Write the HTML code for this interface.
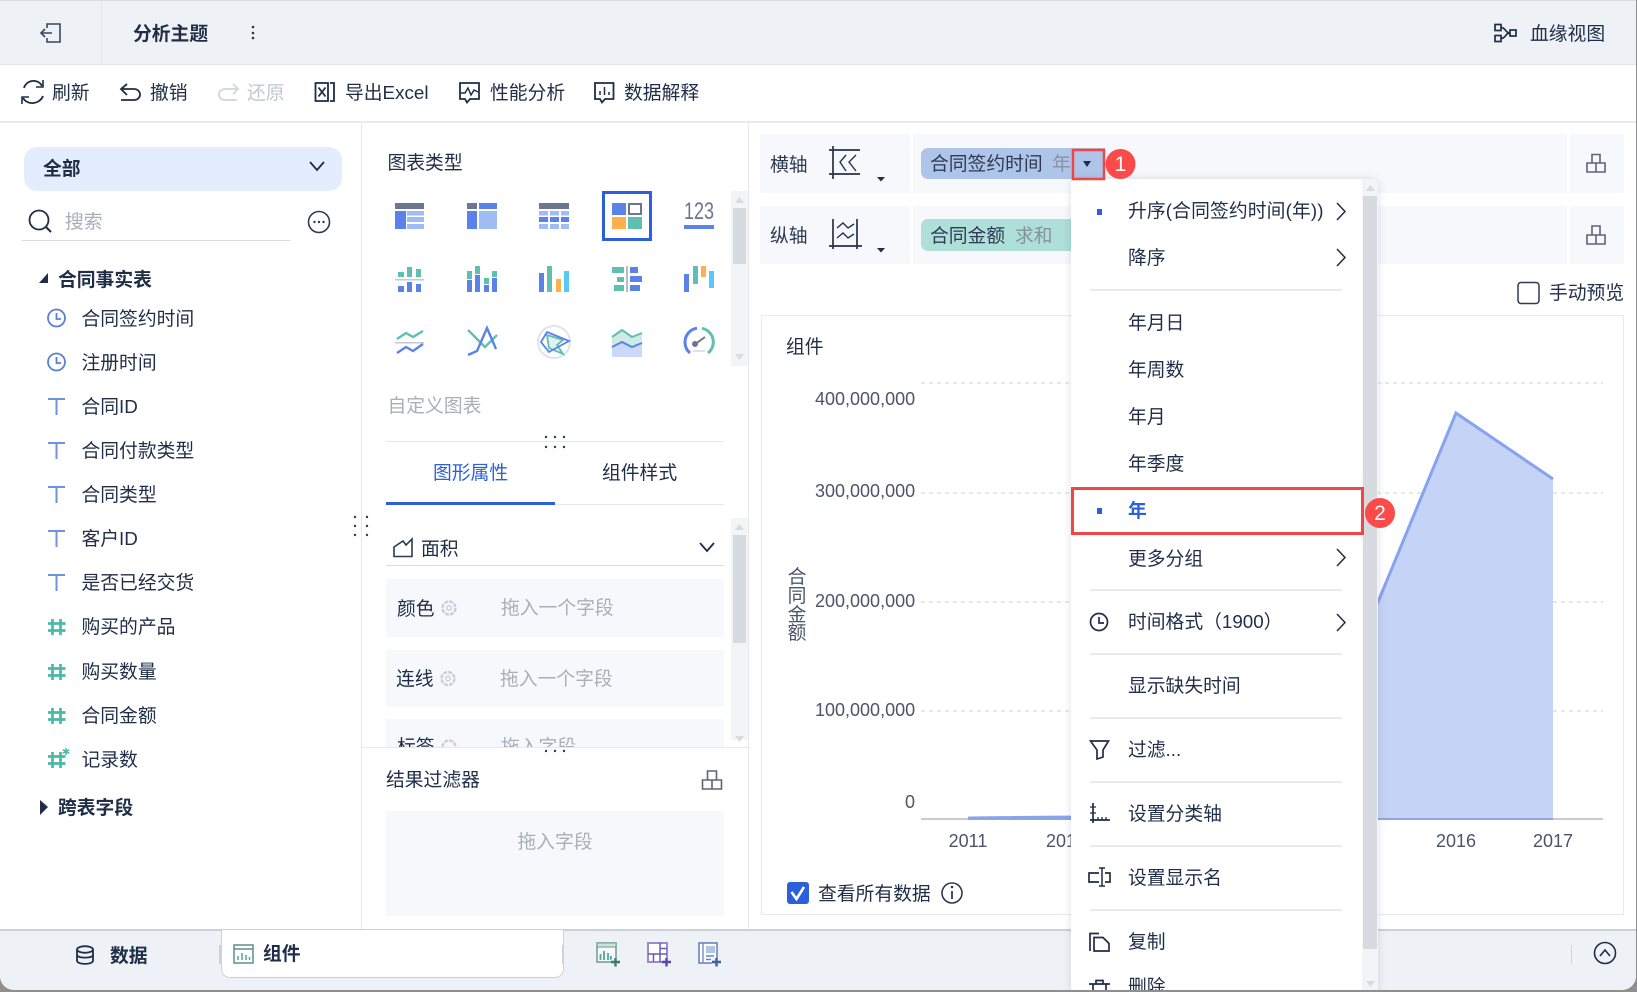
<!DOCTYPE html>
<html lang="zh">
<head>
<meta charset="utf-8">
<title>分析主题</title>
<style>
html,body{margin:0;padding:0;width:1637px;height:992px;overflow:hidden;background:#8f8f8f}
#app{position:absolute;left:0;top:0;width:1636px;height:990px;background:#fff;overflow:hidden;border-radius:0 0 14px 14px;
font-family:"Liberation Sans","Noto Sans CJK SC",sans-serif;font-size:18.8px;color:#1f2d47}
.t{position:absolute;white-space:nowrap;line-height:26px;height:26px;margin-top:1px}
.b{font-weight:700}
.g{color:#a9aeb9}
.box{position:absolute}
.fill{background:#f7f8fc}
svg{position:absolute;overflow:visible}
.sep{position:absolute;left:1090px;width:252px;height:2px;background:#e9ebef}
.ax{font-size:18px;color:#4b5468}
</style>
</head>
<body>
<div id="app">
<!-- bars -->
<div class="box" style="left:0;top:0;width:1636px;height:65px;background:#eef1f6;border-top:1px solid #d8dbe0;border-bottom:1px solid #dfe3ea;box-sizing:border-box"></div>
<div class="box" style="left:101px;top:1px;width:1px;height:63px;background:#e3e6ec"></div>
<div class="box" style="left:0;top:121px;width:1636px;height:2px;background:#e9ebef"></div>
<div class="box" style="left:361px;top:122px;width:1px;height:808px;background:#e6e8ec"></div>
<div class="box" style="left:748px;top:122px;width:1px;height:808px;background:#e6e8ec"></div>

<!-- pill -->
<div class="box" style="left:24px;top:147px;width:318px;height:44px;background:#e3edfd;border-radius:13px"></div>
<div class="box" style="left:22px;top:240px;width:268px;height:1px;background:#d8dbe6"></div>

<!-- middle boxes -->
<div class="box" style="left:731px;top:191px;width:17px;height:175px;background:#f2f4f6"></div>
<div class="box" style="left:733px;top:208px;width:13px;height:56px;background:#d7dbe0"></div>
<div class="box" style="left:386px;top:441px;width:338px;height:1px;background:#e6e8ec"></div>
<div class="box" style="left:386px;top:504px;width:338px;height:1px;background:#e6e8ec"></div>
<div class="box" style="left:386px;top:502px;width:169px;height:3px;background:#2b5fdb"></div>
<div class="box" style="left:731px;top:518px;width:17px;height:222px;background:#f2f4f6"></div>
<div class="box" style="left:733px;top:535px;width:13px;height:108px;background:#d7dbe0"></div>
<div class="box" style="left:386px;top:565px;width:338px;height:1px;background:#d8dbe2"></div>
<div class="box fill" style="left:386px;top:579px;width:338px;height:58px"></div>
<div class="box fill" style="left:386px;top:650px;width:338px;height:57px"></div>
<div class="box fill" style="left:386px;top:811px;width:338px;height:105px"></div>

<!-- axis rows -->
<div class="box fill" style="left:760px;top:134px;width:150px;height:59px"></div>
<div class="box fill" style="left:913px;top:134px;width:654px;height:59px"></div>
<div class="box fill" style="left:1570px;top:134px;width:54px;height:59px"></div>
<div class="box fill" style="left:760px;top:206px;width:150px;height:58px"></div>
<div class="box fill" style="left:913px;top:206px;width:654px;height:58px"></div>
<div class="box fill" style="left:1570px;top:206px;width:54px;height:58px"></div>
<div class="box" style="left:921px;top:148px;width:184px;height:31px;background:#aec4e8;border-radius:7px 0 0 7px"></div>
<div class="box" style="left:921px;top:219px;width:170px;height:32px;background:#aedfd8;border-radius:7px 0 0 7px"></div>

<!-- chart frame -->
<div class="box" style="left:761px;top:315px;width:863px;height:600px;border:1px solid #e6e8ec;box-sizing:border-box"></div>

<!-- main icon svg -->
<svg width="1637" height="992" style="left:0;top:0" fill="none">
 <!-- back -->
 <g stroke="#3a4660" stroke-width="1.6"><path d="M47 28V24H60V42H47V38"/><path d="M52 33H41M45 29L41 33L45 37"/></g>
 <g fill="#2b3750"><circle cx="253" cy="27" r="1.3"/><circle cx="253" cy="33" r="1.3"/><circle cx="253" cy="38" r="1.3"/></g>
 <!-- lineage -->
 <g stroke="#1f2d47" stroke-width="1.7"><rect x="1495" y="24.5" width="6" height="6"/><rect x="1495" y="35.5" width="6" height="6"/><rect x="1510" y="30" width="6" height="6"/><path d="M1501 27.5C1506 27.5 1505 33 1510 33C1505 33 1506 38.5 1501 38.5"/></g>
 <!-- toolbar -->
 <g stroke="#1f2d47" stroke-width="1.8">
  <path d="M24 88C26 80 38 78 42 86M43 96C40 104 28 106 23 98"/><path d="M43 80V87H36" stroke-width="1.6"/><path d="M22 104V97H29" stroke-width="1.6"/>
  <path d="M127 84L121 89L127 95M121 89H134C142 89 142 100 134 100H121"/>
  <path d="M233 84L238 89L233 94M238 89H225C217 89 217 100 225 100H237" stroke="#d1d5dc"/>
  <path d="M315.500 83H328V101H315.500Z"/><path d="M318.500 87.500L325.500 96.500M325.500 87.500L318.500 96.500"/><path d="M330 83H334V101H330"/>
  <path d="M460 83H479V99H470L467 102.500L465 99H460Z"/><path d="M461 93L465 93L468 88L471 95L474 90L478 92" stroke-width="1.5"/>
  <path d="M595 83H613.500V99H605L602 102.500L600 99H595Z"/><path d="M600 95V91M604.500 95V87M609 95V92" stroke-width="1.500"/>
 </g>
 <!-- left -->
 <path d="M310 162L317 170L324 162" stroke="#1f2d47" stroke-width="1.8"/>
 <circle cx="39" cy="220" r="9.500" stroke="#1f2d47" stroke-width="1.8"/><path d="M46 227L51 232" stroke="#1f2d47" stroke-width="2"/>
 <circle cx="319" cy="222" r="10.500" stroke="#2d3a54" stroke-width="1.6"/><g fill="#2d3a54"><circle cx="314.500" cy="222" r="1.200"/><circle cx="319" cy="222" r="1.200"/><circle cx="323.500" cy="222" r="1.200"/></g>
 <path d="M39 283L48 283L48 273Z" fill="#1f2d47"/>
 <path d="M40 800L48 807L40 815Z" fill="#1f2d47"/>
 <!-- clocks -->
 <g stroke="#5a7fd6" stroke-width="1.8"><circle cx="56.500" cy="318" r="8.500"/><path d="M56.500 313V319H61"/><circle cx="56.500" cy="362" r="8.500"/><path d="M56.500 357V363H61"/></g>
 <!-- T -->
 <g stroke="#6f93e0" stroke-width="2"><path d="M48 399H65M56.500 399V415"/><path d="M48 443H65M56.500 443V459"/><path d="M48 487H65M56.500 487V503"/><path d="M48 531H65M56.500 531V547"/><path d="M48 575H65M56.500 575V591"/></g>
 <!-- # -->
 <g stroke="#49b9a8" stroke-width="2.700"><path d="M52.500 619V635M60.500 619V635M48 623.500H65.500M48 630.500H65.500"/><path d="M52.500 664V680M60.500 664V680M48 668.500H65.500M48 675.500H65.500"/><path d="M52.500 708V724M60.500 708V724M48 712.500H65.500M48 719.500H65.500"/><path d="M52.500 752V768M60.500 752V768M48 756.500H65.500M48 763.500H65.500"/></g>
 <path d="M66 748V755M62.800 749.700L69.200 753.300M69.200 749.700L62.800 753.300" stroke="#49b9a8" stroke-width="1.500"/>
 <!-- chart icons row 1 -->
 <g>
  <rect x="395" y="203" width="29" height="6" fill="#6b7690"/><rect x="395" y="211" width="11" height="18" fill="#5b82ea"/><rect x="407" y="211" width="17" height="4.500" fill="#9fbcf5"/><rect x="407" y="217" width="17" height="5" fill="#9fbcf5"/><rect x="407" y="224" width="17" height="5" fill="#9fbcf5"/>
  <rect x="467" y="203" width="10" height="6" fill="#6b7690"/><rect x="479" y="203" width="18" height="6" fill="#5b82ea"/><rect x="467" y="211" width="10" height="18" fill="#5b82ea"/><rect x="479" y="211" width="18" height="18" fill="#9fbcf5"/>
  <rect x="539" y="203" width="30" height="6" fill="#6b7690"/>
  <g fill="#9fbcf5"><rect x="539" y="211" width="9" height="4.500"/><rect x="550" y="211" width="9" height="4.500"/><rect x="561" y="211" width="8" height="4.500"/><rect x="539" y="224" width="9" height="5"/><rect x="550" y="224" width="9" height="5"/><rect x="561" y="224" width="8" height="5"/></g>
  <g fill="#5b82ea"><rect x="539" y="217" width="9" height="5"/><rect x="550" y="217" width="9" height="5"/><rect x="561" y="217" width="8" height="5"/></g>
  <rect x="603.500" y="192.500" width="47" height="47" stroke="#2b5fdb" stroke-width="3"/>
  <rect x="612" y="203" width="14" height="12" fill="#5b82ea"/><rect x="629" y="204" width="12" height="10" stroke="#6b7690" stroke-width="2"/><rect x="612" y="217" width="14" height="12" fill="#ffb04c"/><rect x="628" y="217" width="14" height="12" fill="#5fbfb0"/>
  <rect x="684" y="225" width="30" height="4" fill="#5b82ea"/>
 </g>
 <!-- row 2 -->
 <g fill="#5fbfb0"><rect x="398" y="272" width="6" height="5"/><rect x="407" y="267" width="5" height="10"/><rect x="416" y="269" width="5" height="8"/></g>
 <rect x="395" y="279" width="29" height="1.500" fill="#c3c9d6"/>
 <g fill="#5b82ea"><rect x="398" y="286" width="6" height="6"/><rect x="407" y="282" width="5" height="10"/><rect x="416" y="284" width="5" height="8"/></g>
 <g fill="#5fbfb0"><rect x="467" y="271" width="5" height="8"/><rect x="475" y="266" width="5" height="8"/><rect x="484" y="278" width="5" height="6"/><rect x="492" y="271" width="5" height="6"/></g>
 <g fill="#5b82ea"><rect x="467" y="280" width="5" height="12"/><rect x="475" y="275" width="5" height="17"/><rect x="484" y="285" width="5" height="7"/><rect x="492" y="278" width="5" height="14"/></g>
 <rect x="539" y="273" width="5" height="19" fill="#5b82ea"/><rect x="547" y="266" width="5" height="26" fill="#5fbfb0"/><rect x="556" y="279" width="5" height="13" fill="#ffb04c"/><rect x="564" y="271" width="5" height="21" fill="#58c8f5"/>
 <rect x="626" y="266" width="2" height="26" fill="#b6bcc9"/>
 <g fill="#5fbfb0"><rect x="612" y="267" width="12" height="6"/><rect x="617" y="277" width="7" height="5"/><rect x="614" y="285" width="10" height="6"/></g>
 <g fill="#5b82ea"><rect x="630" y="267" width="8" height="6"/><rect x="630" y="276" width="12" height="6"/><rect x="630" y="285" width="10" height="6"/></g>
 <rect x="684" y="274" width="5" height="18" fill="#5b82ea"/><rect x="693" y="266" width="5" height="18" fill="#5fbfb0"/><rect x="701" y="266" width="5" height="11" fill="#ffb04c"/><rect x="709" y="271" width="5" height="17" fill="#58c8f5"/>
 <!-- row 3 -->
 <path d="M397 339L406 333L413 337L423 331" stroke="#5fbfb0" stroke-width="2.400"/><rect x="395" y="342" width="29" height="1.500" fill="#c3c9d6"/><path d="M397 353L406 347L413 351L423 344" stroke="#5b82ea" stroke-width="2.400"/>
 <path d="M468 330L485 347L497 335" stroke="#5fbfb0" stroke-width="2.400"/><path d="M468 355L477 351L487 328L496 349" stroke="#5b82ea" stroke-width="2.400"/>
 <circle cx="554" cy="342" r="16" stroke="#dfe3ee" stroke-width="2"/><path d="M547 335L563 340L557 345L563 354L549 348Z" stroke="#5fbfb0" stroke-width="1.800" fill="#e3f3f0"/><path d="M541 342L547 332L569 341L558 347L549 352Z" stroke="#5b82ea" stroke-width="1.800"/>
 <path d="M612 337L622 330L632 337L642 333V343L632 347L622 342L612 347Z" fill="#cdeae5"/><path d="M612 347L622 342L632 347L642 343V357H612Z" fill="#cbd8f8"/>
 <path d="M612 337L622 330L632 337L642 333" stroke="#5fbfb0" stroke-width="2"/><path d="M612 347L622 342L632 347L642 343" stroke="#5b82ea" stroke-width="2"/>
 <path d="M690 353A14 14 0 0 1 685 342A14 14 0 0 1 697 328.200" stroke="#5b82ea" stroke-width="3"/><path d="M702 328.300A14 14 0 0 1 708 353" stroke="#5fbfb0" stroke-width="3"/><path d="M694 345L705 337" stroke="#6b7690" stroke-width="2"/><circle cx="695" cy="344" r="3" fill="#6b7690"/><rect x="693" y="350" width="12" height="2" fill="#dfe3ea"/>
 <!-- drag dots -->
 <g fill="#2d3a54"><circle cx="546" cy="437" r="1.200"/><circle cx="555" cy="437" r="1.200"/><circle cx="564" cy="437" r="1.200"/><circle cx="546" cy="447" r="1.200"/><circle cx="555" cy="447" r="1.200"/><circle cx="564" cy="447" r="1.200"/>
 <circle cx="355" cy="517" r="1.200"/><circle cx="367" cy="517" r="1.200"/><circle cx="355" cy="526" r="1.200"/><circle cx="367" cy="526" r="1.200"/><circle cx="355" cy="535" r="1.200"/><circle cx="367" cy="535" r="1.200"/></g>
 <!-- scroll arrows -->
 <g fill="#d7dbe0"><path d="M735 203L739.500 197L744 203Z"/><path d="M735 354L739.500 360L744 354Z"/><path d="M735 530L739.500 524L744 530Z"/><path d="M735 736L739.500 742 744 736Z"/></g>
 <!-- area icon -->
 <path d="M394 556.500V547L403 541L406 545L412 539V556.500Z" stroke="#2d3a54" stroke-width="1.600"/>
 <path d="M700 543L707 551L714 543" stroke="#1f2d47" stroke-width="1.800"/>
 <!-- gears -->
 <g stroke="#c9ced8"><circle cx="449" cy="608" r="6.500" stroke-width="2.400" stroke-dasharray="4 1.100"/><circle cx="449" cy="608" r="2.300" stroke-width="1.400"/><circle cx="448" cy="678.500" r="6.500" stroke-width="2.400" stroke-dasharray="4 1.100"/><circle cx="448" cy="678.500" r="2.300" stroke-width="1.400"/></g>
 <!-- filter box icon -->
 <g stroke="#5b6578" stroke-width="1.600"><path d="M702.500 780H721.500V789H702.500Z"/><path d="M707.500 780V771H716.500V780"/><path d="M712 780V789"/></g>
 <!-- axis icons -->
 <g stroke="#25324c" stroke-width="1.700">
  <path d="M833 146V179M829 150H860M829 174H860"/><path d="M846 155L840 162L846 171M856 155L849 162L856 171" stroke-width="1.400"/>
  <path d="M833 219V249M857 219V249M829 246H862"/><path d="M837 228L843 223L848 228L854 224M837 238L843 233L848 238L854 234" stroke-width="1.400"/>
 </g>
 <path d="M877 177H885L881 181.500Z" fill="#1f2d47"/><path d="M877 248H885L881 252.500Z" fill="#1f2d47"/>
 <g stroke="#5b6578" stroke-width="1.600"><path d="M1587 163H1605V172H1587Z"/><path d="M1592 163V154.500H1600V163"/><path d="M1596 163V172"/><path d="M1587 235H1605V244H1587Z"/><path d="M1592 235V226H1600V235"/><path d="M1596 235V244"/></g>
 <rect x="1518" y="282.500" width="21" height="21" rx="3" stroke="#2d3a54" stroke-width="1.500"/>
 <!-- chart grid -->
 <g stroke="#dfe1e5" stroke-width="1.500" stroke-dasharray="4 4"><path d="M921 383H1603M921 493H1603M921 602H1603M921 711H1603"/></g>
 <path d="M968 819L1075 817L1378 602L1456 413L1553 479V819Z" fill="#c5d3f6"/>
 <path d="M968 818L1075 817L1378 602L1456 413L1553 479" stroke="#86a3f0" stroke-width="3"/>
 <path d="M921 819H1603" stroke="#c9ccd2" stroke-width="2"/>
 <path d="M968 819H1071M1378 819H1553" stroke="#8fa5e0" stroke-width="2"/>
 <!-- check -->
 <rect x="787" y="882" width="22" height="22" rx="3" fill="#2b5fdb"/><path d="M791.500 892L796.500 899L804 887" stroke="#fff" stroke-width="2.600"/>
 <circle cx="952" cy="893" r="10" stroke="#2d3a54" stroke-width="1.600"/><path d="M952 891V899" stroke="#2d3a54" stroke-width="1.800"/><circle cx="952" cy="887" r="1.300" fill="#2d3a54"/>
</svg>

<!-- Bottom bar -->
<div class="box" style="left:0;top:929px;width:1636px;height:61px;background:#eef1f6;border-top:2px solid #ccd0d8;box-sizing:border-box"></div>
<div class="box" style="left:221px;top:930px;width:343px;height:48px;background:#fff;border:1px solid #cdd2da;border-top:none;border-radius:0 0 9px 9px;box-sizing:border-box"></div>
<div class="box" style="left:219px;top:945px;width:2px;height:19px;background:#cdd2da"></div>
<div class="box" style="left:562px;top:945px;width:2px;height:19px;background:#cdd2da"></div>
<div class="box" style="left:1571px;top:945px;width:1px;height:19px;background:#cfd3da"></div>
<svg width="1637" height="992" style="left:0;top:0" fill="none">
 <g stroke="#1f2d47" stroke-width="1.800"><ellipse cx="85" cy="949.500" rx="8" ry="3.300"/><path d="M77 949.500V960.500C77 965 93 965 93 960.500V949.500M77 955C77 958.500 93 958.500 93 955"/></g>
 <g><rect x="234" y="945" width="19" height="18" stroke="#5e8d87" stroke-width="1.500"/><path d="M234 949H253" stroke="#5e8d87" stroke-width="1.500"/><path d="M238 960V956M242 960V953M246 960V955M249.500 960V957" stroke="#49a99b" stroke-width="1.500"/></g>
 <g><rect x="597" y="943" width="19" height="19" fill="#f6f8fb" stroke="#6b9a93" stroke-width="1.500"/><rect x="597" y="943" width="19" height="4" fill="#cfe2df" stroke="#6b9a93" stroke-width="1"/><path d="M600.500 960V954M604 960V951M608 960V953M611 960V956" stroke="#49a99b" stroke-width="1.800"/><path d="M611 962H620M615.500 958V966.500" stroke="#eef1f6" stroke-width="5.500"/><path d="M611 962H620M615.500 958V966.500" stroke="#3f7a72" stroke-width="2.400"/></g>
 <g><rect x="648" y="943" width="19" height="19" fill="#fff" stroke="#9a8ccc" stroke-width="2"/><path d="M660 943V962M648 954H667M653.500 954V962M660 948.500H667" stroke="#6e58b8" stroke-width="1.500"/><path d="M662 962H671M666.500 958V966.500" stroke="#eef1f6" stroke-width="5.500"/><path d="M662 962H671M666.500 958V966.500" stroke="#5a46ac" stroke-width="2.400"/></g>
 <g><rect x="699" y="943" width="18" height="20" fill="#fff" stroke="#6b85bd" stroke-width="1.600"/><path d="M703 943V963" stroke="#6b85bd" stroke-width="1.300"/><rect x="706" y="946" width="9" height="7" fill="#b0c5ea"/><path d="M706 956H714M706 959.500H711" stroke="#5b82ea" stroke-width="1.400"/><path d="M712 962H721M716.500 958V966.500" stroke="#eef1f6" stroke-width="5.500"/><path d="M712 962H721M716.500 958V966.500" stroke="#3f5f9f" stroke-width="2.400"/></g>
 <circle cx="1605" cy="953" r="10.500" stroke="#1f2d47" stroke-width="1.600"/><path d="M1600 956L1605 950L1610 956" stroke="#1f2d47" stroke-width="1.600"/>
</svg>

<!-- Text -->
<span class="t b" style="left:133px;top:20px">分析主题</span>
<span class="t" style="left:1530px;top:20px">血缘视图</span>
<span class="t" style="left:52px;top:79px">刷新</span>
<span class="t" style="left:150px;top:79px">撤销</span>
<span class="t" style="left:247px;top:79px;color:#c3c7cf">还原</span>
<span class="t" style="left:345px;top:79px">导出Excel</span>
<span class="t" style="left:490px;top:79px">性能分析</span>
<span class="t" style="left:624px;top:79px">数据解释</span>
<span class="t b" style="left:43px;top:155px">全部</span>
<span class="t g" style="left:65px;top:208px">搜索</span>
<span class="t b" style="left:58px;top:266px">合同事实表</span>
<span class="t" style="left:81.500px;top:305px">合同签约时间</span>
<span class="t" style="left:81.500px;top:349px">注册时间</span>
<span class="t" style="left:81.500px;top:393px">合同ID</span>
<span class="t" style="left:81.500px;top:437px">合同付款类型</span>
<span class="t" style="left:81.500px;top:481px">合同类型</span>
<span class="t" style="left:81.500px;top:525px">客户ID</span>
<span class="t" style="left:81.500px;top:569px">是否已经交货</span>
<span class="t" style="left:81.500px;top:613px">购买的产品</span>
<span class="t" style="left:81.500px;top:658px">购买数量</span>
<span class="t" style="left:81.500px;top:702px">合同金额</span>
<span class="t" style="left:81.500px;top:746px">记录数</span>
<span class="t b" style="left:58px;top:794px">跨表字段</span>

<span class="t" style="left:387.500px;top:149px">图表类型</span>
<span class="t" style="left:684px;top:198px;font-size:24px;transform:scaleX(.75);transform-origin:0 50%;color:#6b7690">123</span>
<span class="t g" style="left:387.500px;top:392px">自定义图表</span>
<span class="t" style="left:433px;top:459px;color:#2b5fdb">图形属性</span>
<span class="t" style="left:602px;top:459px">组件样式</span>
<span class="t" style="left:421px;top:535px">面积</span>
<span class="t" style="left:397px;top:595px">颜色</span>
<span class="t g" style="left:501px;top:594px">拖入一个字段</span>
<span class="t" style="left:396px;top:665px">连线</span>
<span class="t g" style="left:500px;top:665px">拖入一个字段</span>
<div class="box fill" style="left:386px;top:719px;width:338px;height:28px;overflow:hidden">
 <span class="t" style="left:11px;top:14px">标签</span>
 <span class="t g" style="left:115px;top:14px">拖入字段</span>
 <svg width="30" height="30" style="left:50px;top:15px" fill="none"><circle cx="13" cy="13" r="6.500" stroke="#c9ced8" stroke-width="2.400" stroke-dasharray="4 1.100"/></svg>
</div>
<div class="box" style="left:362px;top:747px;width:386px;height:1px;background:#e6e8ec"></div>
<svg width="1637" height="992" style="left:0;top:0"><g fill="#2d3a54"><circle cx="546" cy="751" r="1.200"/><circle cx="555" cy="751" r="1.200"/><circle cx="564" cy="751" r="1.200"/></g></svg>
<span class="t" style="left:386px;top:766px">结果过滤器</span>
<span class="t g" style="left:517.500px;top:828px">拖入字段</span>

<span class="t b" style="left:110px;top:942px">数据</span>
<span class="t b" style="left:263px;top:940px">组件</span>

<span class="t" style="left:770px;top:151px;color:#2d3a54">横轴</span>
<span class="t" style="left:770px;top:222px;color:#2d3a54">纵轴</span>
<span class="t" style="left:930px;top:150px;color:#2d3a54">合同签约时间</span>
<span class="t" style="left:1052px;top:150px;color:#8993a5">年</span>
<span class="t" style="left:930px;top:222px;color:#2d3a54">合同金额</span>
<span class="t" style="left:1015px;top:222px;color:#84929d">求和</span>
<span class="t" style="left:1549px;top:279px">手动预览</span>
<span class="t" style="left:786px;top:333px">组件</span>
<span class="t ax" style="left:815px;width:100px;text-align:right;top:385px">400,000,000</span>
<span class="t ax" style="left:815px;width:100px;text-align:right;top:477px">300,000,000</span>
<span class="t ax" style="left:815px;width:100px;text-align:right;top:587px">200,000,000</span>
<span class="t ax" style="left:815px;width:100px;text-align:right;top:696px">100,000,000</span>
<span class="t ax" style="left:815px;width:100px;text-align:right;top:788px">0</span>
<span class="t ax" style="left:948px;width:40px;text-align:center;top:827px">2011</span>
<span class="t ax" style="left:1046px;width:40px;text-align:center;top:827px">2012</span>
<span class="t ax" style="left:1436px;width:40px;text-align:center;top:827px">2016</span>
<span class="t ax" style="left:1533px;width:40px;text-align:center;top:827px">2017</span>
<span style="position:absolute;left:787px;top:568px;width:20px;line-height:18.800px;color:#4b5468;white-space:normal;text-align:center">合同金额</span>
<span class="t" style="left:818px;top:880px">查看所有数据</span>

<!-- Menu -->
<div class="box" style="left:1071px;top:179px;width:307px;height:815px;background:#fff;border-radius:6px;box-shadow:0 0 8px rgba(60,70,100,.18);overflow:hidden">
 <div class="box" style="left:291px;top:0;width:16px;height:815px;background:#f2f4f6"></div>
 <div class="box" style="left:292px;top:17px;width:14px;height:753px;background:#d7dbe0"></div>
</div>
<div class="sep" style="top:289px"></div>
<div class="sep" style="top:589px"></div>
<div class="sep" style="top:653px"></div>
<div class="sep" style="top:717px"></div>
<div class="sep" style="top:781px"></div>
<div class="sep" style="top:845px"></div>
<div class="sep" style="top:909px"></div>
<span class="t" style="left:1128px;top:197px;letter-spacing:.12px">升序(合同签约时间(年))</span>
<span class="t" style="left:1128px;top:244px">降序</span>
<span class="t" style="left:1128px;top:309px">年月日</span>
<span class="t" style="left:1128px;top:356px">年周数</span>
<span class="t" style="left:1128px;top:403px">年月</span>
<span class="t" style="left:1128px;top:450px">年季度</span>
<span class="t b" style="left:1128px;top:497px;color:#2b5fdb">年</span>
<span class="t" style="left:1128px;top:545px">更多分组</span>
<span class="t" style="left:1128px;top:608px">时间格式（1900）</span>
<span class="t" style="left:1128px;top:672px">显示缺失时间</span>
<span class="t" style="left:1128px;top:736px">过滤...</span>
<span class="t" style="left:1128px;top:800px">设置分类轴</span>
<span class="t" style="left:1128px;top:864px">设置显示名</span>
<span class="t" style="left:1128px;top:928px">复制</span>
<span class="t" style="left:1128px;top:973px">删除</span>

<svg width="1637" height="992" style="left:0;top:0" fill="none">
 <rect x="1097" y="209" width="5" height="6" fill="#2b5fdb"/><rect x="1097" y="508" width="5" height="6" fill="#2b5fdb"/>
 <g stroke="#1f2d47" stroke-width="1.500"><path d="M1337 203L1345 211.500L1337 220"/><path d="M1337 249L1345 257.500L1337 266"/><path d="M1337 549L1345 557.500L1337 566"/><path d="M1337 614L1345 622.500L1337 631"/></g>
 <g fill="#d7dbe0"><path d="M1366 191L1370.500 185L1375 191Z"/><path d="M1366 981L1370.500 987L1375 981Z"/></g>
 <g stroke="#1f2d47" stroke-width="1.700">
  <circle cx="1099" cy="622" r="8.500"/><path d="M1099 617V623H1104"/>
  <path d="M1090.500 741H1108.500L1103 750V757L1097 759V750Z"/>
  <path d="M1090 820H1110M1093 803V823"/><path d="M1090 807H1096M1090 813H1096M1098 817V820M1102 817V820M1106 817V820" stroke-width="1.300"/>
  <path d="M1099 873H1089V882H1099M1105 873H1110V882H1105"/><path d="M1102 868V886M1099 868H1105M1099 886H1105" stroke-width="1.500"/>
  <path d="M1090 951V933.500H1099"/><path d="M1094 937.500H1103L1109 943.500V951H1094Z"/>
  <path d="M1089 984H1110M1096 984V980.500H1103V984M1093 984V995H1106V984"/>
 </g>
 <!-- red boxes -->
 <rect x="1073" y="150" width="31" height="29" stroke="#f44545" stroke-width="2.500"/>
 <path d="M1083 161H1091L1087 167Z" fill="#1f2d47"/>
 <rect x="1072.500" y="488.500" width="290" height="45" stroke="#f44545" stroke-width="3"/>
 <circle cx="1120.500" cy="164" r="15" fill="#fb4a4a"/>
 <circle cx="1380" cy="513" r="15" fill="#fb4a4a"/>
 <text x="1120.500" y="171" fill="#fff" font-size="21" text-anchor="middle" font-family="Liberation Sans">1</text>
 <text x="1380" y="520" fill="#fff" font-size="21" text-anchor="middle" font-family="Liberation Sans">2</text>
</svg>
</div>
</body>
</html>
